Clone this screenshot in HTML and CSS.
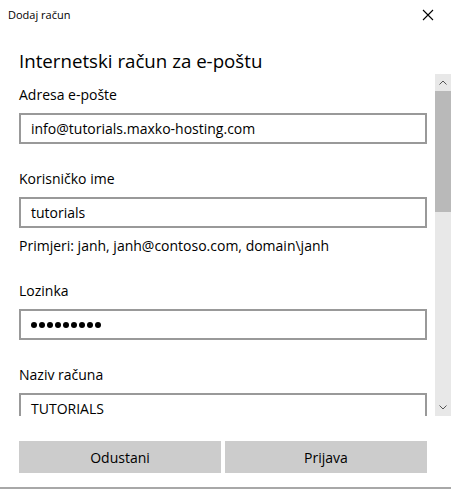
FILE: index.html
```html
<!DOCTYPE html>
<html lang="hr">
<head>
<meta charset="utf-8">
<title>Dodaj račun</title>
<link rel="stylesheet" href="styles.css">
</head>
<body>
<div class="window">
  <div class="titlebar">
    <span class="title">Dodaj račun</span>
    <svg class="close" width="12" height="12" viewBox="0 0 12 12"><path d="M1 1L11 11M11 1L1 11" stroke="#000" stroke-width="1.1" fill="none"/></svg>
  </div>
  <h1 class="heading">Internetski račun za e-poštu</h1>
  <div class="scroll">
    <div class="content">
      <div class="field">
        <div class="label">Adresa e-pošte</div>
        <div class="input">info@tutorials.maxko-hosting.com</div>
      </div>
      <div class="field">
        <div class="label">Korisničko ime</div>
        <div class="input">tutorials</div>
        <div class="hint">Primjeri: janh, janh@contoso.com, domain\janh</div>
      </div>
      <div class="field">
        <div class="label">Lozinka</div>
        <div class="input password"><span class="dot"></span><span class="dot"></span><span class="dot"></span><span class="dot"></span><span class="dot"></span><span class="dot"></span><span class="dot"></span><span class="dot"></span><span class="dot"></span></div>
      </div>
      <div class="field">
        <div class="label">Naziv računa</div>
        <div class="input">TUTORIALS</div>
      </div>
    </div>
    <div class="scrollbar">
      <div class="arrow"><svg width="8" height="5" viewBox="0 0 8 5"><path d="M0.5 4.5L4 1L7.5 4.5" stroke="#555" stroke-width="1" fill="none"/></svg></div>
      <div class="thumb"></div>
      <div class="track"></div>
      <div class="arrow"><svg width="8" height="5" viewBox="0 0 8 5"><path d="M0.5 0.5L4 4L7.5 0.5" stroke="#555" stroke-width="1" fill="none"/></svg></div>
    </div>
  </div>
  <div class="buttons">
    <button class="btn">Odustani</button>
    <button class="btn">Prijava</button>
  </div>
  <div class="footer"></div>
</div>
</body>
</html>
```
FILE: styles.css
```css
html, body {
  margin: 0;
  padding: 0;
  background: #fff;
}
body {
  font-family: "Open Sans", "Noto Sans", sans-serif;
  color: #000;
  width: 451px;
  height: 489px;
  overflow: hidden;
}
.window {
  display: flex;
  flex-direction: column;
  height: 489px;
}
.titlebar {
  height: 30px;
  display: flex;
  align-items: center;
  justify-content: space-between;
  padding: 0 17px 0 8px;
}
.title {
  font-size: 11px;
  line-height: 16px;
  margin-top: -1px;
}
.close {
  display: block;
}
.heading {
  margin: 18px 0 0 19px;
  font-size: 18.7px;
  font-weight: 400;
  line-height: 26px;
  height: 26px;
}
.scroll {
  display: flex;
  height: 342px;
  overflow: hidden;
}
.content {
  flex: 1;
  padding: 11px 8px 0 19px;
  overflow: hidden;
}
.field {
  margin-bottom: 25px;
}
.label {
  font-size: 14px;
  line-height: 20px;
  margin-bottom: 8px;
}
.input {
  box-sizing: border-box;
  height: 31px;
  border: 2px solid #999;
  padding: 0 10px;
  font-size: 14px;
  line-height: 27px;
  white-space: nowrap;
}
.password {
  display: flex;
  align-items: center;
  gap: 2px;
}
.dot {
  width: 6px;
  height: 6px;
  border-radius: 50%;
  background: #000;
}
.hint {
  font-size: 14px;
  line-height: 20px;
  margin-top: 8px;
  margin-bottom: 0;
}
.scrollbar {
  width: 16px;
  display: flex;
  flex-direction: column;
  background: #e8e8e8;
}
.arrow {
  height: 17px;
  display: flex;
  align-items: center;
  justify-content: center;
}
.thumb {
  height: 121px;
  background: #b9b9b9;
}
.track {
  flex: 1;
}
.buttons {
  display: flex;
  gap: 4px;
  padding: 25px 24px 0 19px;
}
.btn {
  flex: 1;
  height: 32px;
  border: none;
  background: #ccc;
  font-family: inherit;
  font-size: 14px;
  color: #000;
  padding: 0;
}
.footer {
  margin-top: auto;
  height: 2px;
  background: #a8a8a8;
}
```
